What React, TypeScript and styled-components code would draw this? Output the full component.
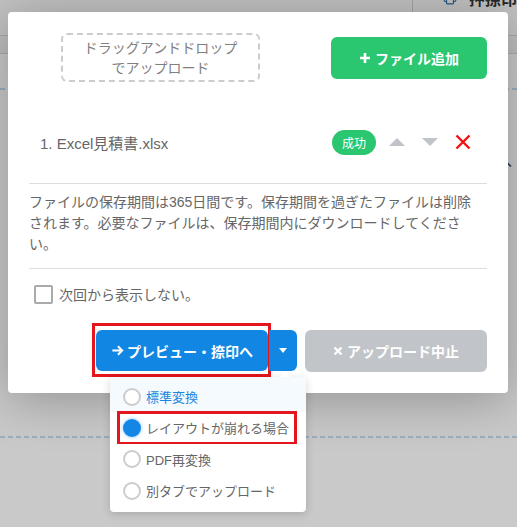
import React from "react";
import styled, { createGlobalStyle } from "styled-components";
import { Printer } from "lucide-react";

const GlobalStyle = createGlobalStyle`
  html, body {
    margin: 0;
    padding: 0;
  }
  body {
    width: 517px;
    height: 527px;
    overflow: hidden;
    font-family: "Liberation Sans", "Noto Sans CJK JP", sans-serif;
    color: #666;
  }
  * {
    box-sizing: border-box;
  }
`;

const options = [
	{ label: "標準変換", checked: false, hover: true, marked: false },
	{ label: "レイアウトが崩れる場合", checked: true, hover: false, marked: true },
	{ label: "PDF再変換", checked: false, hover: false, marked: false },
	{ label: "別タブでアップロード", checked: false, hover: false, marked: false }
];

export default function App() {
	return (
		<>
			<GlobalStyle />
			<Page>
				<Header>
					<HeaderTool>
						<Printer size={16} color="#2f6ea8" strokeWidth={2} />
						<HeaderLabel>押捺印</HeaderLabel>
					</HeaderTool>
				</Header>
				<SubBar />
				<DashedLine $top={88} />
				<BackText>変換へ</BackText>
				<DashedLine $top={436} />

				<Overlay>
					<Modal>
						<TopRow>
							<DropZone>
								ドラッグアンドドロップ
								<br />
								でアップロード
							</DropZone>
							<AddButton>
								<PlusIcon viewBox="0 0 12 12">
									<path d="M6 1v10M1 6h10" />
								</PlusIcon>
								ファイル追加
							</AddButton>
						</TopRow>

						<FileRow>
							<FileName>1. Excel見積書.xlsx</FileName>
							<Badge>成功</Badge>
							<Arrow $dir="up" />
							<Arrow $dir="down" />
							<RemoveIcon viewBox="0 0 16 16">
								<path d="M1.5 1.5l13 13M14.5 1.5l-13 13" />
							</RemoveIcon>
						</FileRow>

						<Divider $gap={27} />
						<Notice>
							ファイルの保存期間は365日間です。保存期間を過ぎたファイルは削除されます。必要なファイルは、保存期間内にダウンロードしてください。
						</Notice>
						<Divider $gap={0} />

						<CheckRow>
							<CheckBox />
							<span>次回から表示しない。</span>
						</CheckRow>

						<ButtonRow>
							<SplitGroup>
								<MainButton>
									<ArrowIcon viewBox="0 0 14 14">
										<path d="M1.5 7h10M7.5 2.5L12 7l-4.5 4.5" />
									</ArrowIcon>
									プレビュー・捺印へ
									<Mark $t={-7} $r={-3} $b={-6} $l={-4} />
								</MainButton>
								<CaretButton>
									<Caret />
								</CaretButton>
								<Menu>
									{options.map((o) => (
										<MenuItem key={o.label} $hover={o.hover}>
											<Radio $checked={o.checked} />
											{o.label}
											{o.marked && <Mark $t={-1} $r={9} $b={-1} $l={7} />}
										</MenuItem>
									))}
								</Menu>
							</SplitGroup>
							<CancelButton>
								<CrossIcon viewBox="0 0 10 10">
									<path d="M1.5 1.5l7 7M8.5 1.5l-7 7" />
								</CrossIcon>
								アップロード中止
							</CancelButton>
						</ButtonRow>
					</Modal>
				</Overlay>
			</Page>
		</>
	);
}

const Page = styled.div`
	position: relative;
	width: 517px;
	height: 527px;
	overflow: hidden;
	background: #ffffff;
`;

const Header = styled.div`
	height: 36px;
	display: flex;
	justify-content: flex-end;
	background: #f7f7f7;
	border-bottom: 1px solid #d6d6d6;
`;

const HeaderTool = styled.div`
	width: 105px;
	display: flex;
	align-items: flex-start;
	gap: 12px;
	padding-left: 30px;
	border-left: 1px solid #d0d0d0;
	margin-top: -8px;
	svg {
		margin-top: -2px;
	}
`;

const HeaderLabel = styled.span`
	font-size: 16px;
	font-weight: bold;
	color: #333;
	line-height: 16px;
	white-space: nowrap;
`;

const SubBar = styled.div`
	height: 18px;
	background: #f2f2f2;
	border-bottom: 1px solid #dadada;
`;

const DashedLine = styled.div<{ $top: number }>`
	position: absolute;
	left: 0;
	right: 0;
	top: ${(p) => p.$top}px;
	height: 2px;
	background: repeating-linear-gradient(90deg, #c4dcf0 0 5px, transparent 5px 8px);
`;

const BackText = styled.div`
	position: absolute;
	right: 5px;
	top: 150px;
	font-size: 15px;
	color: #222;
`;

const Overlay = styled.div`
	position: absolute;
	inset: 0;
	background: rgba(0, 0, 0, 0.21);
`;

const Modal = styled.div`
	position: absolute;
	left: 8px;
	top: 12px;
	width: 500px;
	padding: 21px 21px 21px;
	background: #fff;
	border-radius: 4px;
	box-shadow: 0 6px 50px rgba(0, 0, 0, 0.28);
`;

const TopRow = styled.div`
	display: flex;
	align-items: center;
	justify-content: space-between;
	padding-left: 32px;
`;

const DropZone = styled.div`
	width: 199px;
	height: 49px;
	display: flex;
	flex-direction: column;
	justify-content: center;
	align-items: center;
	text-align: center;
	border: 2px dashed #cccccc;
	border-radius: 6px;
	font-size: 14px;
	line-height: 20px;
	color: #808080;
`;

const AddButton = styled.button`
	width: 156px;
	height: 42px;
	display: flex;
	align-items: center;
	justify-content: center;
	gap: 4px;
	border: none;
	border-radius: 6px;
	background: #2bc670;
	color: #fff;
	font-family: inherit;
	font-size: 14px;
	font-weight: bold;
`;

const PlusIcon = styled.svg`
	width: 12px;
	height: 12px;
	stroke: #fff;
	stroke-width: 2.6;
	fill: none;
`;

const FileRow = styled.div`
	margin-top: 46px;
	height: 28px;
	display: flex;
	align-items: center;
	padding: 0 16px 0 11px;
`;

const FileName = styled.span`
	flex: 1;
	font-size: 15px;
	color: #666;
`;

const Badge = styled.span`
	height: 25px;
	padding: 0 10px;
	display: flex;
	align-items: center;
	border-radius: 13px;
	background: #2bc670;
	color: #fff;
	font-size: 12px;
`;

const Arrow = styled.span<{ $dir: "up" | "down" }>`
	width: 0;
	height: 0;
	margin-left: ${(p) => (p.$dir === "up" ? 13 : 17)}px;
	border-left: 8px solid transparent;
	border-right: 8px solid transparent;
	${(p) =>
		p.$dir === "up"
			? "border-bottom: 8px solid #c0c4c8;"
			: "border-top: 8px solid #c0c4c8;"}
`;

const RemoveIcon = styled.svg`
	width: 16px;
	height: 16px;
	margin-left: 17px;
	stroke: #f50f0f;
	stroke-width: 2.4;
	fill: none;
`;

const Divider = styled.div<{ $gap: number }>`
	margin-top: ${(p) => p.$gap}px;
	border-top: 1px solid #dddddd;
`;

const Notice = styled.p`
	margin: 0;
	padding: 8px 6px 13px 0;
	font-size: 14px;
	line-height: 21px;
	color: #666;
`;

const CheckRow = styled.label`
	margin-top: 15px;
	display: flex;
	align-items: center;
	gap: 6px;
	padding-left: 5px;
	font-size: 14px;
	color: #666;
`;

const CheckBox = styled.span`
	width: 19px;
	height: 19px;
	border: 2px solid #aaaaaa;
	border-radius: 2px;
	background: #fff;
`;

const ButtonRow = styled.div`
	margin-top: 26px;
	display: flex;
	justify-content: flex-end;
	gap: 8px;
`;

const SplitGroup = styled.div`
	position: relative;
	display: flex;
	gap: 1px;
`;

const BlueButton = styled.button`
	position: relative;
	height: 41px;
	display: flex;
	align-items: center;
	justify-content: center;
	border: none;
	background: #1186e3;
	color: #fff;
	font-family: inherit;
	font-size: 14px;
	font-weight: bold;
`;

const MainButton = styled(BlueButton)`
	width: 172px;
	gap: 3px;
	border-radius: 6px;
`;

const CaretButton = styled(BlueButton)`
	width: 28px;
	border-radius: 0 6px 6px 0;
`;

const Caret = styled.span`
	width: 0;
	height: 0;
	border-left: 4px solid transparent;
	border-right: 4px solid transparent;
	border-top: 5px solid #fff;
`;

const ArrowIcon = styled.svg`
	width: 13px;
	height: 13px;
	stroke: #fff;
	stroke-width: 2.2;
	fill: none;
`;

const CancelButton = styled.button`
	width: 182px;
	height: 42px;
	display: flex;
	align-items: center;
	justify-content: center;
	gap: 4px;
	border: none;
	border-radius: 6px;
	background: #c1c5c9;
	color: #fff;
	font-family: inherit;
	font-size: 14px;
	font-weight: bold;
`;

const CrossIcon = styled.svg`
	width: 10px;
	height: 10px;
	stroke: #fff;
	stroke-width: 2.4;
	fill: none;
`;

const Mark = styled.span<{ $t: number; $r: number; $b: number; $l: number }>`
	position: absolute;
	top: ${(p) => p.$t}px;
	right: ${(p) => p.$r}px;
	bottom: ${(p) => p.$b}px;
	left: ${(p) => p.$l}px;
	border: 3px solid #e3161d;
	pointer-events: none;
`;

const Menu = styled.div`
	position: absolute;
	top: calc(100% + 5px);
	left: 14px;
	width: 196px;
	padding: 4px 0 5px;
	background: #fff;
	border-radius: 4px;
	box-shadow: 0 2px 8px rgba(0, 0, 0, 0.16);
	&::before {
		content: "";
		position: absolute;
		top: -5px;
		left: 170px;
		border-left: 5px solid transparent;
		border-right: 5px solid transparent;
		border-bottom: 5px solid #fff;
	}
`;

const MenuItem = styled.div<{ $hover: boolean }>`
	position: relative;
	height: ${(p) => (p.$hover ? 35 : 31.5)}px;
	margin-top: ${(p) => (p.$hover ? -4 : 0)}px;
	padding: ${(p) => (p.$hover ? "4px 0 0 13px" : "0 0 0 13px")};
	display: flex;
	align-items: center;
	gap: 5px;
	border-radius: ${(p) => (p.$hover ? "4px 4px 0 0" : "0")};
	background: ${(p) => (p.$hover ? "#f5faff" : "#fff")};
	color: ${(p) => (p.$hover ? "#1a86dc" : "#666")};
	font-size: 13px;
	white-space: nowrap;
`;

const Radio = styled.span<{ $checked: boolean }>`
	width: 18px;
	height: 18px;
	border-radius: 50%;
	border: ${(p) => (p.$checked ? "none" : "2px solid #cccccc")};
	background: ${(p) => (p.$checked ? "#1487e6" : "#fff")};
	box-shadow: ${(p) => (p.$checked ? "0 0 4px rgba(20, 135, 230, 0.45)" : "none")};
`;
